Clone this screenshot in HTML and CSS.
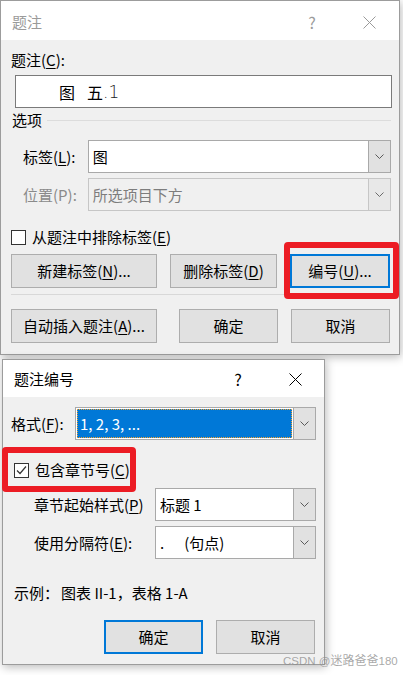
FILE: index.html
```html
<!DOCTYPE html>
<html lang="zh">
<head>
<meta charset="utf-8">
<link rel="stylesheet" href="styles.css">
</head>
<body>
<div class="dlg dlg1">
  <div class="titlebar inactive">
    <span class="title">题注</span>
    <span class="tb-help">?</span>
    <span class="tb-close"><svg width="13" height="13" viewBox="0 0 13 13"><path d="M0.5 0.5L12.5 12.5M12.5 0.5L0.5 12.5" stroke="#9a9a9a" stroke-width="1" fill="none"/></svg></span>
  </div>
  <div class="body b1">
    <div class="line">题注(<u>C</u>):</div>
    <div class="caption-input"><span class="cap-ch">图</span><span class="cap-ch">五</span><span class="cap-num">.1</span></div>
    <div class="group"><span>选项</span><span class="rule"></span></div>
    <div class="row r-first">
      <span class="lbl l1">标签(<u>L</u>):</span>
      <div class="combo c1"><span class="val">图</span><span class="drop"><svg width="9" height="5" viewBox="0 0 9 5"><path d="M0.5 0.5L4.5 4.5L8.5 0.5" stroke="#5a5a5a" fill="none"/></svg></span></div>
    </div>
    <div class="row r-next">
      <span class="lbl l1 disabled">位置(P):</span>
      <div class="combo c1 dis"><span class="val">所选项目下方</span><span class="drop"><svg width="9" height="5" viewBox="0 0 9 5"><path d="M0.5 0.5L4.5 4.5L8.5 0.5" stroke="#6a6a6a" fill="none"/></svg></span></div>
    </div>
    <div class="check ck1"><span class="box"></span><span>从题注中排除标签(<u>E</u>)</span></div>
    <div class="btnrow br1">
      <span class="btn w146">新建标签(<u>N</u>)...</span>
      <span class="btn w107 gap13">删除标签(<u>D</u>)</span>
      <span class="btn w100 gap13 default">编号(<u>U</u>)...</span>
    </div>
    <div class="sep"></div>
    <div class="btnrow br2">
      <span class="btn w146">自动插入题注(<u>A</u>)...</span>
      <span class="btn w99 gap22">确定</span>
      <span class="btn w99 gap13">取消</span>
    </div>
  </div>
  <div class="redbox red1"></div>
</div>

<div class="dlg dlg2">
  <div class="titlebar">
    <span class="title">题注编号</span>
    <span class="tb-help h2">?</span>
    <span class="tb-close x2"><svg width="13" height="13" viewBox="0 0 13 13"><path d="M0.5 0.5L12.5 12.5M12.5 0.5L0.5 12.5" stroke="#000" stroke-width="1" fill="none"/></svg></span>
  </div>
  <div class="body b2">
    <div class="row r-fmt">
      <span class="lbl l2">格式(<u>F</u>):</span>
      <div class="combo c2"><span class="val selwrap"><span class="sel">1, 2, 3, ...</span></span><span class="drop"><svg width="9" height="5" viewBox="0 0 9 5"><path d="M0.5 0.5L4.5 4.5L8.5 0.5" stroke="#5a5a5a" fill="none"/></svg></span></div>
    </div>
    <div class="check ck2"><span class="box"><svg width="13" height="13" viewBox="0 0 13 13"><path d="M2 6.5L5 9.5L11 2.5" stroke="#333" stroke-width="1.2" fill="none"/></svg></span><span>包含章节号(<u>C</u>)</span></div>
    <div class="row r-ch">
      <span class="lbl l3">章节起始样式(<u>P</u>)</span>
      <div class="combo c3"><span class="val">标题 1</span><span class="drop"><svg width="9" height="5" viewBox="0 0 9 5"><path d="M0.5 0.5L4.5 4.5L8.5 0.5" stroke="#5a5a5a" fill="none"/></svg></span></div>
    </div>
    <div class="row r-next">
      <span class="lbl l3">使用分隔符(<u>E</u>):</span>
      <div class="combo c3"><span class="val">.<span class="sep-name">(句点)</span></span><span class="drop"><svg width="9" height="5" viewBox="0 0 9 5"><path d="M0.5 0.5L4.5 4.5L8.5 0.5" stroke="#5a5a5a" fill="none"/></svg></span></div>
    </div>
    <div class="line example">示例：<span class="ex-gap">图表 II-1，表格 1-A</span></div>
    <div class="btnrow br3">
      <span class="btn w99 default">确定</span>
      <span class="btn w99 gap13">取消</span>
    </div>
  </div>
  <div class="redbox red2"></div>
</div>

<div class="watermark"><span class="wm-lat">CSDN @</span>迷路爸爸<span class="wm-lat">180</span></div>
</body>
</html>
```

FILE: styles.css
```css
* { box-sizing: border-box; }

body {
  margin: 0;
  width: 403px;
  height: 675px;
  overflow: hidden;
  position: relative;
  background: #fff;
  font-family: "Noto Sans CJK SC", "Noto Sans", sans-serif;
  font-size: 15px;
  line-height: 20px;
  color: #000;
}

u { text-decoration: underline; text-underline-offset: 2px; text-decoration-thickness: 1px; }

.dlg {
  position: relative;
  background: #f0f0f0;
  border: 1px solid #9c9c9c;
  box-shadow: 1px 2px 9px rgba(0, 0, 0, 0.28);
}
.dlg1 { width: 400px; }
.dlg2 { width: 323px; margin: 4px 0 0 2px; }

.titlebar {
  display: flex;
  align-items: center;
  background: #fff;
}
.dlg1 .titlebar { height: 39px; padding-top: 3px; }
.dlg2 .titlebar { height: 37px; padding-top: 1px; }
.title { flex: 1; padding-left: 11px; }
.inactive { color: #9a9a9a; }
.tb-help { width: 54px; text-align: center; font-size: 16px; }
.tb-close { width: 60px; display: flex; justify-content: center; }
.h2 { width: 56px; }
.x2 { width: 58px; }

.b1 { padding: 10px 8px 11px 10px; }
.b2 { padding: 10px 8px 10px 8px; }

.line { height: 20px; }

.caption-input {
  margin: 5px 0 0 4px;
  width: 377px;
  height: 33px;
  background: #fff;
  border: 1px solid #7a7a7a;
  padding-left: 43px;
  display: flex;
  align-items: center;
  font-size: 16px;
}
.cap-ch { margin-right: 12px; font-weight: 400; }
.cap-ch + .cap-ch { margin-right: 0; }
.cap-num { font-family: "DejaVu Sans", sans-serif; font-weight: 300; font-size: 17px; color: #222; }

.group {
  display: flex;
  align-items: center;
  height: 20px;
  margin-top: 2px;
  padding-left: 1px;
}
.rule { flex: 1; height: 1px; background: #dcdcdc; margin-left: 5px; }

.row { display: flex; align-items: center; }
.r-first { margin-top: 10px; padding-left: 12px; }
.r-next { margin-top: 5px; }
.b1 .r-next { padding-left: 12px; }
.r-fmt { margin-top: 0; }
.r-ch { margin-top: 7px; }
.b2 .r-ch, .b2 .r-ch + .r-next { padding-left: 23px; }

.l1 { width: 65px; }
.l2 { width: 64px; }
.l3 { width: 121px; }
.disabled { color: #8a8a8a; }

.combo {
  height: 33px;
  border: 1px solid #a9a9a9;
  background: #fff;
  display: flex;
}
.c1 { width: 304px; }
.c2 { width: 241px; }
.c3 { width: 161px; }
.combo .val {
  flex: 1;
  display: flex;
  align-items: center;
  padding-left: 4px;
}
.combo .drop {
  width: 22px;
  background: #e1e1e1;
  border-left: 1px solid #a9a9a9;
  display: flex;
  align-items: center;
  justify-content: center;
}
.combo.dis { background: #f0f0f0; border-color: #c6c6c6; color: #7d7d7d; }
.combo.dis .drop { background: #e8e8e8; border-left-color: #c6c6c6; }

.selwrap { padding: 1px !important; }
.sel {
  flex: 1;
  height: 29px;
  background: #0078d7;
  color: #fff;
  border: 1px dotted #f0a030;
  display: flex;
  align-items: center;
  padding-left: 2px;
}
.sep-name { margin-left: 20px; }

.check {
  display: flex;
  align-items: center;
  height: 22px;
  gap: 6px;
}
.ck1 { margin-top: 15px; }
.ck2 { margin-top: 19px; padding-left: 3px; }
.box {
  width: 15px;
  height: 15px;
  border: 1px solid #333;
  background: #fff;
  display: flex;
  align-items: center;
  justify-content: center;
}

.btnrow { display: flex; }
.br1 { margin-top: 6px; }
.br2 { margin-top: 14px; }
.br3 { margin-top: 17px; padding-left: 93px; }

.btn {
  height: 34px;
  background: #e1e1e1;
  border: 1px solid #adadad;
  display: flex;
  align-items: center;
  justify-content: center;
}
.btn.default { border: 2px solid #0078d7; }
.w146 { width: 146px; }
.w107 { width: 107px; }
.w100 { width: 100px; }
.w99 { width: 99px; }
.gap13 { margin-left: 13px; }
.gap22 { margin-left: 22px; }

.sep { margin-top: 6px; height: 1px; width: 380px; background: #d8d8d8; }

.example { margin-top: 24px; padding-left: 3px; }
.ex-gap { margin-left: 2px; }

.redbox {
  position: absolute;
  border: 6px solid #ec1c24;
  border-radius: 4px;
}
.red1 { left: 283px; top: 241px; width: 115px; height: 57px; }
.red2 { left: -1px; top: 87px; width: 134px; height: 45px; }

.watermark {
  position: absolute;
  left: 283px;
  top: 651px;
  white-space: nowrap;
  font-size: 12px;
  line-height: 18px;
  color: rgba(140, 140, 140, 0.75);
  font-family: "Noto Sans CJK SC", sans-serif;
}
.wm-lat { font-family: "Liberation Sans", sans-serif; font-size: 11.5px; }
```
